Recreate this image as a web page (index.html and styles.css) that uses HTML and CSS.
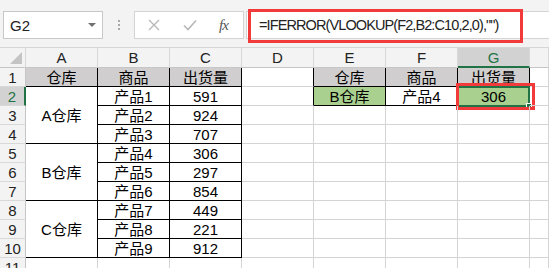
FILE: index.html
```html
<!DOCTYPE html>
<html lang="zh">
<head>
<meta charset="utf-8">
<link rel="stylesheet" href="styles.css">
</head>
<body>
<div class="app">
  <div class="toolbar">
    <div class="namebox"><span class="nb-text">G2</span><span class="caret"></span></div>
    <div class="grip"><i></i><i></i><i></i></div>
    <div class="fbtns">
      <svg class="ic-x" width="12" height="12" viewBox="0 0 12 12"><path d="M1 1L11 11M11 1L1 11" stroke="#b8b8b8" stroke-width="1.4" fill="none"/></svg>
      <svg class="ic-ok" width="14" height="12" viewBox="0 0 14 12"><path d="M1 6.5L5 10.5L13 1.5" stroke="#b8b8b8" stroke-width="1.6" fill="none"/></svg>
      <span class="fx">fx</span>
    </div>
    <div class="finput">
      <span class="ftext">=IFERROR(VLOOKUP(F2,B2:C10,2,0),"")</span>
      <div class="hl hl-formula"></div>
    </div>
  </div>
  <div class="grid">
    <div class="c hd corner"><span class="tri"></span></div>
    <div class="c hd">A</div><div class="c hd">B</div><div class="c hd">C</div><div class="c hd">D</div>
    <div class="c hd">E</div><div class="c hd">F</div><div class="c hd hd-sel">G</div><div class="c hd"></div>

    <div class="c rh">1</div>
    <div class="c t th">仓库</div><div class="c t th">商品</div><div class="c t th">出货量</div>
    <div class="c dl"></div>
    <div class="c t th">仓库</div><div class="c t th">商品</div><div class="c t th">出货量</div><div class="c"></div>

    <div class="c rh rh-sel">2</div>
    <div class="c t merge">A仓库</div><div class="c t">产品1</div><div class="c t">591</div>
    <div class="c dl"></div>
    <div class="c t tg">B仓库</div><div class="c t">产品4</div>
    <div class="c t tg selcell">306<div class="sel"><span class="handle"></span></div><div class="hl hl-cell"></div></div>
    <div class="c"></div>

    <div class="c rh">3</div>
    <div class="c t">产品2</div><div class="c t">924</div>
    <div class="c"></div><div class="c"></div><div class="c"></div><div class="c"></div><div class="c"></div>

    <div class="c rh">4</div>
    <div class="c t">产品3</div><div class="c t">707</div>
    <div class="c"></div><div class="c"></div><div class="c"></div><div class="c"></div><div class="c"></div>

    <div class="c rh">5</div>
    <div class="c t merge">B仓库</div><div class="c t">产品4</div><div class="c t">306</div>
    <div class="c"></div><div class="c"></div><div class="c"></div><div class="c"></div><div class="c"></div>

    <div class="c rh">6</div>
    <div class="c t">产品5</div><div class="c t">297</div>
    <div class="c"></div><div class="c"></div><div class="c"></div><div class="c"></div><div class="c"></div>

    <div class="c rh">7</div>
    <div class="c t">产品6</div><div class="c t">854</div>
    <div class="c"></div><div class="c"></div><div class="c"></div><div class="c"></div><div class="c"></div>

    <div class="c rh">8</div>
    <div class="c t merge">C仓库</div><div class="c t">产品7</div><div class="c t">449</div>
    <div class="c"></div><div class="c"></div><div class="c"></div><div class="c"></div><div class="c"></div>

    <div class="c rh">9</div>
    <div class="c t">产品8</div><div class="c t">221</div>
    <div class="c"></div><div class="c"></div><div class="c"></div><div class="c"></div><div class="c"></div>

    <div class="c rh">10</div>
    <div class="c t">产品9</div><div class="c t">912</div>
    <div class="c"></div><div class="c"></div><div class="c"></div><div class="c"></div><div class="c"></div>

    <div class="c rh">11</div>
    <div class="c"></div><div class="c"></div><div class="c"></div><div class="c"></div><div class="c"></div><div class="c"></div><div class="c"></div><div class="c"></div>
  </div>
</div>
</body>
</html>
```

FILE: styles.css
```css
* { box-sizing: border-box; }
html, body { margin: 0; padding: 0; }
body {
  width: 549px;
  height: 268px;
  overflow: hidden;
  background: #fff;
  font-family: "Liberation Sans", "Noto Sans CJK SC", sans-serif;
  font-size: 15px;
  color: #000;
}
.app { width: 549px; }

/* ===== toolbar ===== */
.toolbar {
  height: 48px;
  background: #f3f3f3;
  border-bottom: 1px solid #d6d6d6;
  display: flex;
  align-items: flex-start;
  padding-top: 11px;
  padding-left: 3px;
}
.namebox {
  width: 100px;
  height: 28px;
  background: #fff;
  border: 1px solid #c8c8c8;
  display: flex;
  align-items: center;
  padding-left: 6px;
  position: relative;
}
.nb-text { font-size: 15px; color: #222; }
.caret {
  position: absolute;
  right: 6px;
  top: 11px;
  width: 0; height: 0;
  border-left: 4px solid transparent;
  border-right: 4px solid transparent;
  border-top: 4px solid #707070;
}
.grip {
  width: 31px;
  height: 28px;
  display: flex;
  flex-direction: column;
  align-items: center;
  justify-content: center;
  gap: 2px;
}
.grip i {
  display: block;
  width: 2px; height: 2px;
  background: #a8a8a8;
}
.fbtns {
  width: 110px;
  height: 28px;
  background: #fff;
  border: 1px solid #d4d4d4;
  display: flex;
  align-items: center;
  position: relative;
}
.ic-x { margin-left: 13px; }
.ic-ok { margin-left: 23px; }
.fx {
  margin-left: 22px;
  font-family: "Liberation Serif", serif;
  font-style: italic;
  font-size: 15px;
  color: #555;
  letter-spacing: -1px;
}
.finput {
  flex: 1;
  margin-left: 2px;
  height: 28px;
  background: #fff;
  border: 1px solid #d4d4d4;
  border-right: none;
  display: flex;
  align-items: center;
  padding-left: 12px;
  position: relative;
}
.ftext {
  font-size: 14.5px;
  letter-spacing: -0.9px;
  color: #222;
  white-space: nowrap;
}
.hl {
  position: absolute;
  border: 3px solid #f23a3a;
  pointer-events: none;
}
.hl-formula { left: 1px; top: -3px; width: 275px; height: 34px; }

/* ===== grid ===== */
.grid {
  display: grid;
  grid-template-columns: 26px repeat(7, 72px) 1fr;
  grid-template-rows: 20px;
  grid-auto-rows: 19px;
}
.c {
  border-right: 1px solid #d4d4d4;
  border-bottom: 1px solid #d4d4d4;
  display: flex;
  align-items: center;
  justify-content: center;
  position: relative;
  white-space: nowrap;
  line-height: 1;
}
.hd {
  background: #f3f3f3;
  color: #222;
  font-size: 15px;
  border-bottom-color: #c6c6c6;
  border-right-color: #d8d8d8;
}
.corner { justify-content: flex-end; align-items: flex-end; }
.tri {
  width: 0; height: 0;
  margin: 0 3px 3px 0;
  border-left: 12px solid transparent;
  border-bottom: 12px solid #c4c4c4;
}
.hd-sel {
  background: #d2d2d2;
  color: #217346;
  border-bottom: 2px solid #217346;
}
.rh {
  background: #f3f3f3;
  color: #222;
  font-size: 15px;
  border-right-color: #c6c6c6;
  border-bottom-color: #d8d8d8;
}
.rh-sel {
  background: #d2d2d2;
  color: #217346;
  border-right: 2px solid #217346;
}
.t {
  border-right: 1px solid #000;
  border-bottom: 1px solid #000;
}
.th { background: #d0cece; }
.tg { background: #a9d08e; }
.dl { border-right: 1px solid #000; }
.merge { grid-row: span 3; }
.sel {
  position: absolute;
  left: -1px;
  top: -1px;
  width: 73px;
  height: 21px;
  border: 2px solid #217346;
}
.handle {
  position: absolute;
  right: -4px;
  bottom: -4px;
  width: 6px;
  height: 6px;
  background: #217346;
  border: 1px solid #fff;
}
.hl-cell { left: -2px; top: -4px; width: 79px; height: 27px; }
```
